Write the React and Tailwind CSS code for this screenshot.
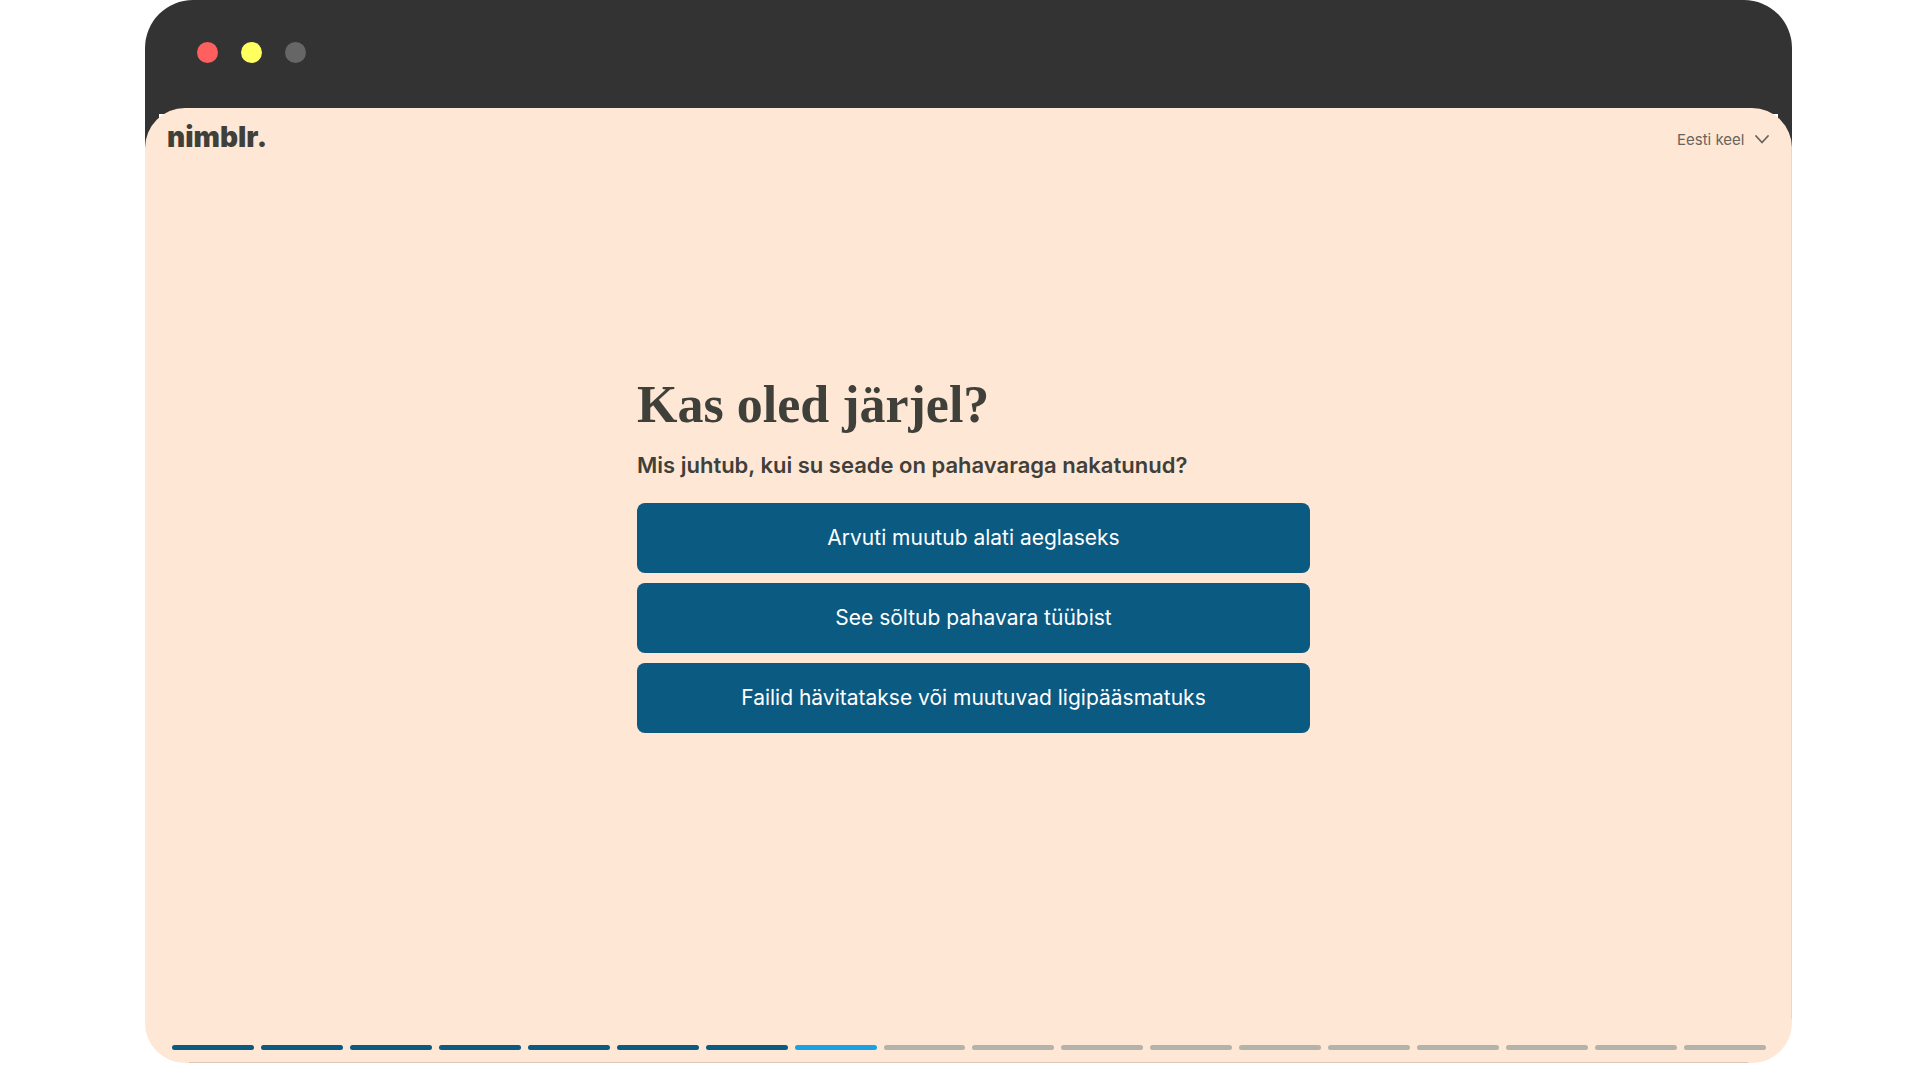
import React, { useState } from "react";

const answers = [
  "Arvuti muutub alati aeglaseks",
  "See sõltub pahavara tüübist",
  "Failid hävitatakse või muutuvad ligipääsmatuks",
];

const totalSteps = 18;
const currentStep = 7;

function WindowBar() {
  return (
    <div className="h-[148px] shrink-0 rounded-t-[48px] bg-[#333333] pl-[52px] pt-[42px]">
      <div className="flex gap-[23px]">
        <span className="h-[21px] w-[21px] rounded-full bg-[#ff5f5f]" />
        <span className="h-[21px] w-[21px] rounded-full bg-[#ffff5f]" />
        <span className="h-[21px] w-[21px] rounded-full bg-[#666666]" />
      </div>
    </div>
  );
}

function LanguageSelect() {
  const [language, setLanguage] = useState("et");

  return (
    <div className="relative text-[#66645c]">
      <select
        aria-label="Keel"
        value={language}
        onChange={(e) => setLanguage(e.target.value)}
        className="block cursor-pointer appearance-none bg-transparent pr-6 text-[15px] leading-5"
      >
        <option value="et">Eesti keel</option>
      </select>
      <svg
        className="pointer-events-none absolute right-0 top-[5px] h-[9px] w-[14px]"
        viewBox="0 0 14 9"
        fill="none"
        stroke="currentColor"
        strokeWidth="1.8"
        strokeLinecap="round"
        strokeLinejoin="round"
      >
        <path d="M1 1l6 6.5L13 1" />
      </svg>
    </div>
  );
}

function ProgressBar() {
  const getStepClass = (i) => {
    if (i < currentStep) return "bg-[#0a5a82]";
    if (i === currentStep) return "bg-[#1aa3e4]";
    return "bg-[#b3b3ab]";
  };

  return (
    <div className="flex gap-[7px] pl-[27px] pr-[26px]">
      {Array.from({ length: totalSteps }, (_, i) => (
        <span key={i} className={`h-[5px] flex-1 rounded-full ${getStepClass(i)}`} />
      ))}
    </div>
  );
}

export default function App() {
  const [selected, setSelected] = useState(null);

  return (
    <div className="flex h-screen flex-col bg-white pb-[17px] pl-[145px] pr-[128px] font-['Inter',sans-serif]">
      <WindowBar />

      <div className="relative -mt-10 flex flex-1 flex-col">
        {/* White page behind the rounded panel */}
        <div className="absolute left-[14px] right-[14px] top-[6px] h-10 bg-white" />

        <main className="relative flex flex-1 flex-col rounded-[40px] bg-[#ffe7d6] pb-[13px]">
          <header className="flex items-end justify-between pl-[22px] pr-[23px] pt-[9px]">
            <a
              href="#"
              className="text-[28px] font-black leading-[40px] text-[#3f403a]"
            >
              nimblr.
            </a>
            <div className="pb-[7px]">
              <LanguageSelect />
            </div>
          </header>

          <section className="flex flex-1 flex-col items-center pl-[10px] pt-[214px]">
            <div className="w-full max-w-[673px]">
              <h1 className="font-['Liberation_Serif',serif] text-[52px] font-bold leading-[68px] text-[#3f403a]">
                Kas oled järjel?
              </h1>
              <p className="mt-[10px] text-[22px] font-semibold leading-8 text-[#3f403a]">
                Mis juhtub, kui su seade on pahavaraga nakatunud?
              </p>
              <div className="mt-[22px] flex flex-col gap-[10px]">
                {answers.map((answer) => (
                  <button
                    key={answer}
                    type="button"
                    aria-pressed={selected === answer}
                    onClick={() => setSelected(answer)}
                    className="h-[70px] cursor-pointer rounded-lg bg-[#0a5a82] text-[21px] text-white"
                  >
                    {answer}
                  </button>
                ))}
              </div>
            </div>
          </section>

          <ProgressBar />

          {/* Thin edges on the bottom and right */}
          <div className="absolute bottom-0 left-11 right-11 h-px bg-[#dcc8b9]" />
          <div className="absolute bottom-11 right-0 top-10 w-px bg-[#ecd6c6]" />
        </main>
      </div>
    </div>
  );
}
